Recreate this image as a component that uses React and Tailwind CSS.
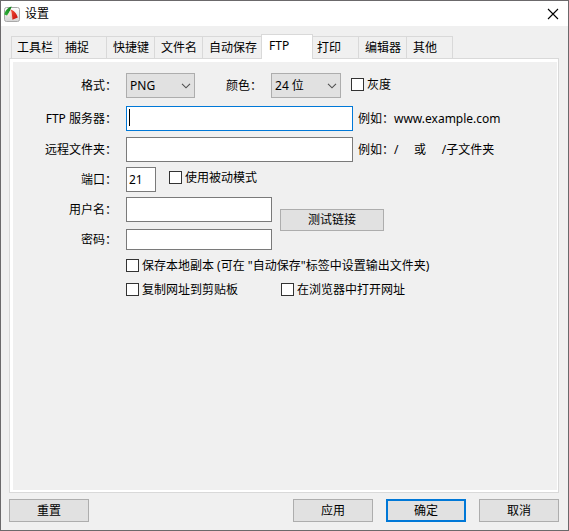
import React from "react";

const TABS = [
  { name: "工具栏", width: "w-[47px]", pad: "pl-[5px]", edge: "border-l" },
  { name: "捕捉", width: "w-12", pad: "pl-1.5", edge: "border-l" },
  { name: "快捷键", width: "w-12", pad: "pl-1.5", edge: "border-l" },
  { name: "文件名", width: "w-12", pad: "pl-1.5", edge: "border-l" },
  { name: "自动保存", width: "w-[59px]", pad: "pl-1.5", edge: "border-l" },
  { name: "FTP", width: "w-[52px]", pad: "pl-[7px]", edge: "border-x", selected: true },
  { name: "打印", width: "w-[45px]", pad: "pl-1", edge: "" },
  { name: "编辑器", width: "w-12", pad: "pl-1.5", edge: "border-l" },
  { name: "其他", width: "w-[47px]", pad: "pl-1.5", edge: "border-x" },
];

function AppIcon() {
  return (
    <svg width="16" height="16" viewBox="0 0 16 16" aria-hidden="true">
      <defs>
        <linearGradient id="tile" x1="0" y1="0" x2="0" y2="1">
          <stop offset="0" stopColor="#fff" />
          <stop offset="1" stopColor="#d4d4d4" />
        </linearGradient>
        <linearGradient id="green" x1="1" y1="0" x2="0" y2="1">
          <stop offset="0" stopColor="#0d7d18" />
          <stop offset="1" stopColor="#35b53c" />
        </linearGradient>
        <linearGradient id="red" x1="0" y1="0" x2="1" y2="1">
          <stop offset="0" stopColor="#f4523a" />
          <stop offset="1" stopColor="#c40808" />
        </linearGradient>
      </defs>
      <rect x="0.5" y="1.5" width="15" height="14" rx="2" fill="url(#tile)" stroke="#a9a9a9" />
      <path d="M7.6 0.6L6.2 4.4L3 9.6L0.3 8.6C1 5 3.2 2 7.6 0.6Z" fill="url(#green)" />
      <path d="M6.4 4L5.2 10.6L3.6 10.2Z" fill="#fbe3dc" />
      <path d="M6.6 3.4C9.8 4.2 12.6 7.2 13.8 11.4L8.4 13.8C8.2 10 7.8 6.6 6.6 3.4Z" fill="url(#red)" />
      <path d="M6.8 4.6C7.4 7.4 7.4 9.4 7.2 12" fill="none" stroke="#f7b5a4" strokeWidth="0.7" />
    </svg>
  );
}

function Tab({ name, width, pad, edge, selected }) {
  const look = selected ? "h-[25px] -mb-px bg-white pb-[3px]" : "h-[22px]";
  return (
    <button
      type="button"
      role="tab"
      aria-selected={!!selected}
      className={`relative flex shrink-0 items-center whitespace-nowrap border-t border-[#d9d9d9] ${edge} ${width} ${pad} ${look}`}
    >
      {name}
    </button>
  );
}

function Row({ id, label, className = "", children }) {
  return (
    <div className={`flex h-[25px] items-center ${className}`}>
      <label htmlFor={id} className="mr-[9px] w-[104px] shrink-0 text-right">
        {label}
      </label>
      {children}
    </div>
  );
}

function Field({ id, className, ...rest }) {
  return (
    <input
      id={id}
      className={`border bg-white px-0.5 outline-none ${className}`}
      {...rest}
    />
  );
}

function Combo({ id, value, width }) {
  return (
    <div className={`relative shrink-0 ${width}`}>
      <select
        id={id}
        defaultValue={value}
        className="block h-[25px] w-full appearance-none border border-[#adadad] bg-[#e1e1e1] pl-[3px]"
      >
        <option>{value}</option>
      </select>
      <svg
        className="pointer-events-none absolute right-1 top-2.5"
        width="10"
        height="6"
        viewBox="0 0 10 6"
        aria-hidden="true"
      >
        <path d="M1 0.8L5 4.8L9 0.8" fill="none" stroke="#505050" strokeWidth="1.1" />
      </svg>
    </div>
  );
}

function Check({ label, className = "" }) {
  return (
    <label className={`flex items-center gap-[3px] whitespace-nowrap ${className}`}>
      <input
        type="checkbox"
        className="size-[13px] shrink-0 appearance-none border border-[#333] bg-white checked:bg-[#333]"
      />
      {label}
    </label>
  );
}

function PushButton({ primary, className, children }) {
  const edge = primary ? "border-2 border-[#0078d7]" : "border border-[#adadad]";
  return (
    <button
      type="button"
      className={`flex items-center justify-center bg-[#e1e1e1] ${edge} ${className}`}
    >
      {children}
    </button>
  );
}

export default function App() {
  return (
    <div className="flex min-h-screen flex-col border border-[#6b696b] bg-[#f0f0f0] font-['Noto_Sans','Noto_Sans_CJK_SC',sans-serif] text-[12px] leading-4 text-black">
      <header className="flex h-[25px] items-center bg-white pl-[3px] pr-[9px]">
        <AppIcon />
        <h1 className="ml-[5px] grow">设置</h1>
        <button type="button" aria-label="关闭">
          <svg width="12" height="12" viewBox="0 0 12 12" aria-hidden="true">
            <path d="M1 1L11 11M11 1L1 11" stroke="#000" strokeWidth="1.1" />
          </svg>
        </button>
      </header>

      <main className="flex grow flex-col pl-2 pr-[9px] pt-2">
        <div role="tablist" className="flex items-end pl-0.5">
          {TABS.map((tab) => (
            <Tab key={tab.name} {...tab} />
          ))}
        </div>

        <section className="flex grow flex-col border border-[#d9d9d9] bg-white pb-0.5 pl-[3px] pr-px pt-[3px]">
          <form className="grow bg-[#f0f0f0] pt-[11px]">
            <Row id="format" label="格式：">
              <Combo id="format" value="PNG" width="w-[69px]" />
              <label htmlFor="depth" className="ml-[31px] mr-[9px] shrink-0">
                颜色：
              </label>
              <Combo id="depth" value="24 位" width="w-[70px]" />
              <Check label="灰度" className="mb-0.5 ml-2.5" />
            </Row>

            <Row id="server" label="FTP 服务器：" className="mt-2">
              <div className="relative shrink-0">
                <Field id="server" className="block h-[25px] w-[227px] border-[#0078d7]" />
                <span className="absolute left-[3px] top-[3px] h-[17px] w-px bg-black" />
              </div>
              <span className="ml-[5px] whitespace-nowrap">例如：www.example.com</span>
            </Row>

            <Row id="folder" label="远程文件夹：" className="mt-1.5">
              <Field id="folder" className="h-[25px] w-[227px] border-[#7a7a7a]" />
              <span className="ml-[5px] whitespace-pre">例如：/{"     "}或{"     "}/子文件夹</span>
            </Row>

            <Row id="port" label="端口：" className="mt-[5px]">
              <Field id="port" defaultValue="21" className="h-[25px] w-[30px] border-[#7a7a7a]" />
              <Check label="使用被动模式" className="mb-1 ml-[13px]" />
            </Row>

            <div className="mt-[5px] flex">
              <div>
                <Row id="user" label="用户名：">
                  <Field id="user" className="h-[25px] w-[146px] border-[#7a7a7a]" />
                </Row>
                <Row id="password" label="密码：" className="mt-[5px]">
                  <Field
                    id="password"
                    type="password"
                    className="h-[21px] w-[146px] border-[#7a7a7a]"
                  />
                </Row>
              </div>
              <PushButton className="ml-2 mt-3 h-[22px] w-[104px]">测试链接</PushButton>
            </div>

            <div className="mt-0.5 flex flex-col gap-px pl-[113px]">
              <Check label={'保存本地副本 (可在 "自动保存"标签中设置输出文件夹)'} className="h-[23px]" />
              <div className="flex">
                <Check label="复制网址到剪贴板" className="h-[23px] w-[155px]" />
                <Check label="在浏览器中打开网址" className="h-[23px]" />
              </div>
            </div>
          </form>
        </section>
      </main>

      <footer className="flex gap-[13px] pb-2 pl-2 pr-[9px] pt-1.5">
        <PushButton className="mr-auto h-[23px] w-20">重置</PushButton>
        <PushButton className="h-[23px] w-20">应用</PushButton>
        <PushButton primary className="h-[23px] w-20">
          确定
        </PushButton>
        <PushButton className="h-[23px] w-20">取消</PushButton>
      </footer>
    </div>
  );
}
